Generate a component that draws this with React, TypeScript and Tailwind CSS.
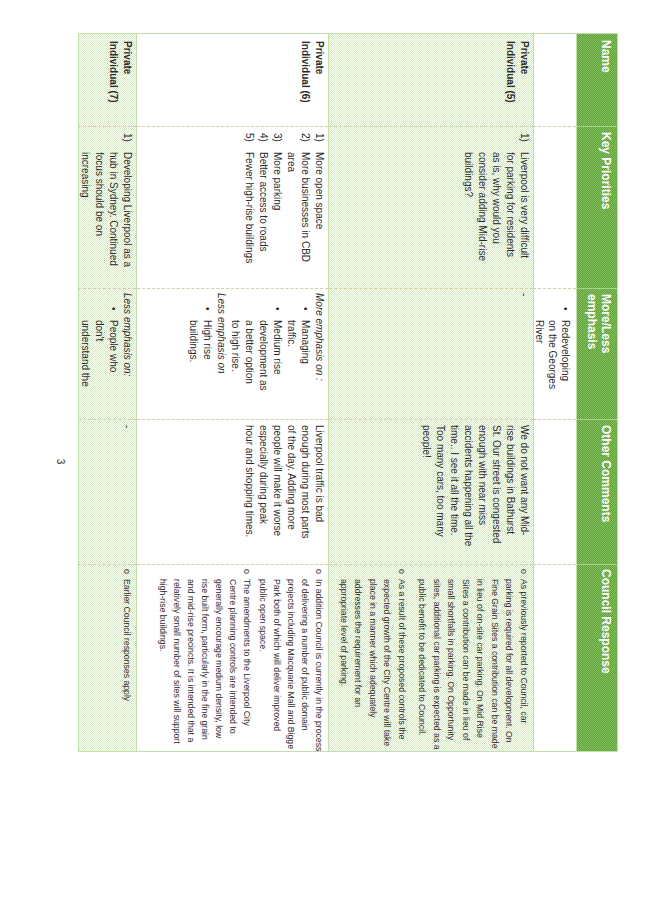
import React from "react";

const shaded =
  "bg-[image:repeating-conic-gradient(#d2e8bd_0_25%,#ffffff_0_50%)] bg-[length:2px_2px]";
const headerBg =
  "bg-[image:repeating-conic-gradient(#5c9f37_0_25%,#88c262_0_50%)] bg-[length:2px_2px]";

function Lines({ lines }: { lines: string[] }) {
  return (
    <>
      {lines.map((l, i) => (
        <div key={i} className="whitespace-nowrap">
          {l}
        </div>
      ))}
    </>
  );
}

function Num({ n, lines }: { n: string; lines: string[] }) {
  return (
    <div className="flex">
      <span className="w-[19px] shrink-0">{n}</span>
      <div>
        <Lines lines={lines} />
      </div>
    </div>
  );
}

function Bullet({ lines }: { lines: string[] }) {
  return (
    <div className="flex pl-[14px]">
      <span className="w-[13px] shrink-0">•</span>
      <div>
        <Lines lines={lines} />
      </div>
    </div>
  );
}

function Circle({ lines }: { lines: string[] }) {
  return (
    <div className="flex">
      <span className="w-[10px] shrink-0">o</span>
      <div>
        <Lines lines={lines} />
      </div>
    </div>
  );
}

const grid = "grid grid-cols-[92px_162px_131px_145px_189px]";
const sep = "border-l border-dashed border-[#d3cfa8]";

function Row({
  h,
  bg,
  cells,
}: {
  h: string;
  bg: string;
  cells: React.ReactNode[];
}) {
  return (
    <div className={`${grid} ${h} ${bg} border-t border-[#c3e0ab] overflow-hidden`}>
      <div className="pl-[7px] pt-[2px] font-bold">{cells[0]}</div>
      <div className={`${sep} pl-[6px] pt-[2px]`}>{cells[1]}</div>
      <div className={`${sep} pl-[4px] pt-[2px]`}>{cells[2]}</div>
      <div className={`${sep} pl-[5px] pt-[2px]`}>{cells[3]}</div>
      <div className={`${sep} pl-[4px] pt-[2px] text-[8.7px] leading-[14px]`}>{cells[4]}</div>
    </div>
  );
}

export default function App() {
  return (
    <div className="relative w-[653px] h-[923px] overflow-hidden bg-white">
      <div className="absolute left-0 top-0 w-[923px] h-[653px] origin-top-left rotate-90 translate-x-[653px] bg-white font-['Liberation_Sans',Arial,sans-serif] text-[#2b2b2b]">
        <div className="ml-[33px] mt-[35px] w-[719px] border border-[#c3e0ab] text-[10px] leading-[14px]">
          {/* header */}
          <div className={`${grid} h-[40px] ${headerBg} text-white font-bold text-[12px] leading-[14px]`}>
            <div className="pl-[6px] pt-[4px]">Name</div>
            <div className="border-l border-[#a9d48d] pl-[5px] pt-[4px]">Key Priorities</div>
            <div className="border-l border-[#a9d48d] pl-[5px] pt-[4px]">
              More/Less
              <br />
              emphasis
            </div>
            <div className="border-l border-[#a9d48d] pl-[5px] pt-[4px]">Other Comments</div>
            <div className="border-l border-[#a9d48d] pl-[4px] pt-[4px]">Council Response</div>
          </div>

          {/* row continuation */}
          <div className={`${grid} h-[43px] bg-white border-t border-[#c3e0ab] leading-[13px]`}>
            <div />
            <div className={sep} />
            <div className={`${sep} pl-[4px] pt-[4px]`}>
              <Bullet lines={["Redeveloping", "on the Georges", "River"]} />
            </div>
            <div className={sep} />
            <div className={sep} />
          </div>

          <Row
            h="h-[205px]"
            bg={shaded}
            cells={[
              <Lines lines={["Private", "Individual (5)"]} />,
              <Num
                n="1)"
                lines={[
                  "Liverpool is very difficult",
                  "for parking for residents",
                  "as is, why would you",
                  "consider adding Mid-rise",
                  "buildings?",
                ]}
              />,
              <div>-</div>,
              <Lines
                lines={[
                  "We do not want any Mid-",
                  "rise buildings in Bathurst",
                  "St. Our street is congested",
                  "enough with near miss",
                  "accidents happening all the",
                  "time.. I see it all the time.",
                  "Too many cars, too many",
                  "people!",
                ]}
              />,
              <div className="flex flex-col gap-[6px] leading-[14.5px]">
                <Circle
                  lines={[
                    "As previously reported to Council, car",
                    "parking is required for all development. On",
                    "Fine Grain Sites a contribution can be made",
                    "in lieu of on-site car parking. On Mid Rise",
                    "Sites a contribution can be made in lieu of",
                    "small shortfalls in parking. On Opportunity",
                    "sites, additional car parking is expected as a",
                    "public benefit to be dedicated to Council.",
                  ]}
                />
                <Circle
                  lines={[
                    "As a result of these proposed controls the",
                    "expected growth of the City Centre will take",
                    "place in a manner which adequately",
                    "addresses the requirement for an",
                    "appropriate level of parking.",
                  ]}
                />
              </div>,
            ]}
          />

          <Row
            h="h-[192px]"
            bg="bg-white"
            cells={[
              <Lines lines={["Private", "Individual (6)"]} />,
              <div>
                <Num n="1)" lines={["More open space"]} />
                <Num n="2)" lines={["More businesses in CBD", "area"]} />
                <Num n="3)" lines={["More parking"]} />
                <Num n="4)" lines={["Better access to roads"]} />
                <Num n="5)" lines={["Fewer high-rise buildings"]} />
              </div>,
              <div>
                <div className="italic">More emphasis on :</div>
                <Bullet lines={["Managing", "traffic."]} />
                <Bullet lines={["Medium rise", "development as", "a better option", "to high rise."]} />
                <div className="italic">Less emphasis on</div>
                <Bullet lines={["High rise", "buildings."]} />
              </div>,
              <Lines
                lines={[
                  "Liverpool traffic is bad",
                  "enough during most parts",
                  "of the day. Adding more",
                  "people will make it worse",
                  "especially during peak",
                  "hour and shopping times.",
                ]}
              />,
              <div className="flex flex-col gap-[2px]">
                <Circle
                  lines={[
                    "In addition Council is currently in the process",
                    "of delivering a number of public domain",
                    "projects including Macquarie Mall and Bigge",
                    "Park both of which will deliver improved",
                    "public open space.",
                  ]}
                />
                <Circle
                  lines={[
                    "The amendments to the Liverpool City",
                    "Centre planning controls are intended to",
                    "generally encourage medium density, low",
                    "rise built form, particularly in the fine grain",
                    "and mid-rise precincts. It is intended that a",
                    "relatively small number of sites will support",
                    "high-rise buildings.",
                  ]}
                />
              </div>,
            ]}
          />

          <Row
            h="h-[58px]"
            bg={shaded}
            cells={[
              <Lines lines={["Private", "Individual (7)"]} />,
              <Num
                n="1)"
                lines={[
                  "Developing Liverpool as a",
                  "hub in Sydney. Continued",
                  "focus should be on",
                  "increasing",
                ]}
              />,
              <div>
                <div className="italic">Less emphasis on:</div>
                <Bullet lines={["People who", "don't", "understand the"]} />
              </div>,
              <div>-</div>,
              <Circle lines={["Earlier Council responses apply"]} />,
            ]}
          />
        </div>
        <div className="mt-[11px] text-center text-[10px] leading-[14px]">3</div>
      </div>
    </div>
  );
}
